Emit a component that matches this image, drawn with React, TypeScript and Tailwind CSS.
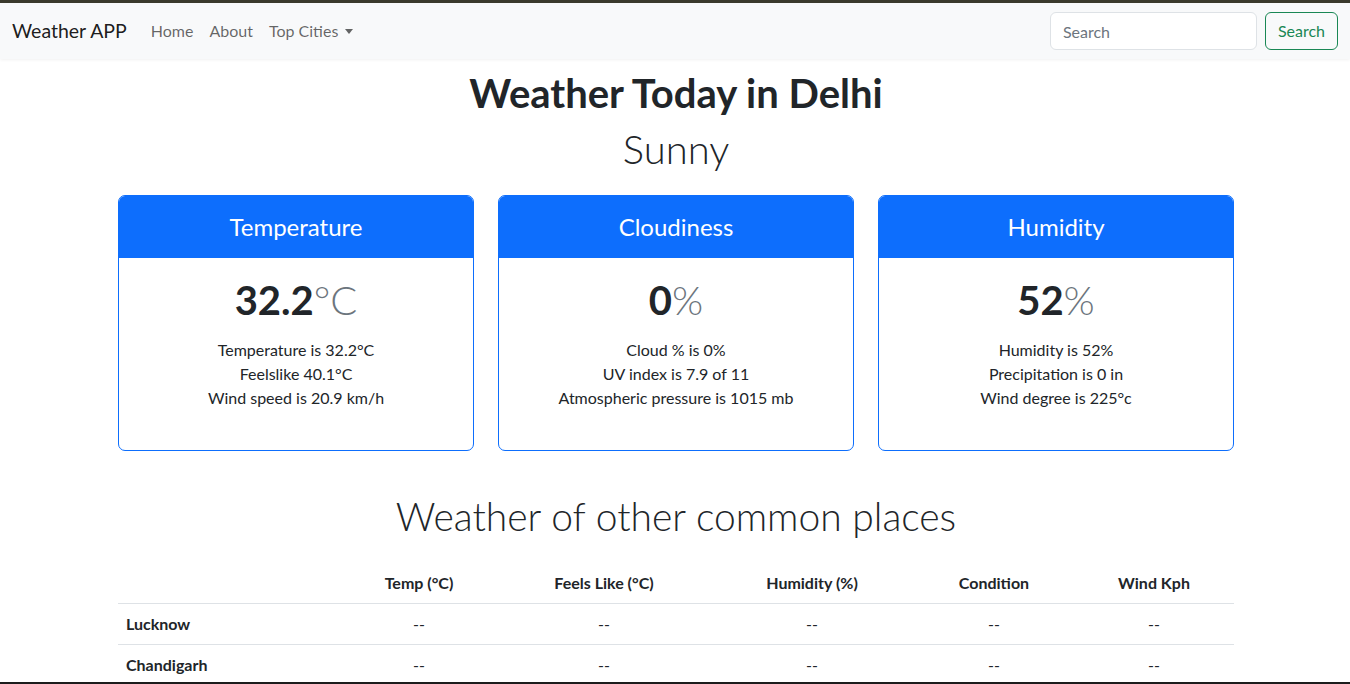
import { useState } from 'react';

const cards = [
  {
    title: 'Temperature',
    value: '32.2',
    unit: '°C',
    lines: ['Temperature is 32.2°C', 'Feelslike 40.1°C', 'Wind speed is 20.9 km/h'],
  },
  {
    title: 'Cloudiness',
    value: '0',
    unit: '%',
    lines: ['Cloud % is 0%', 'UV index is 7.9 of 11', 'Atmospheric pressure is 1015 mb'],
  },
  {
    title: 'Humidity',
    value: '52',
    unit: '%',
    lines: ['Humidity is 52%', 'Precipitation is 0 in', 'Wind degree is 225°c'],
  },
];

const cities = ['Lucknow', 'Chandigarh'];

export default function App() {
  const [query, setQuery] = useState('');

  return (
    <div className="h-screen overflow-hidden border-t-[3px] border-b-2 border-t-[#3a3a2c] border-b-[#1c1c1c] bg-white text-[#212529] font-['Lato','Liberation_Sans',sans-serif]">
      {/* Navbar */}
      <nav className="flex h-[56px] items-center bg-[#f8f9fa] px-3 shadow-[0_1px_3px_rgba(0,0,0,0.06)]">
        <a className="mr-[16px] text-[19.5px] text-black/90">Weather APP</a>
        <ul className="flex items-center text-[16px] text-black/60">
          <li className="px-2">Home</li>
          <li className="px-2">About</li>
          <li className="flex items-center px-2">
            Top Cities
            <span className="ml-[7px] inline-block h-0 w-0 border-x-[4px] border-t-[5px] border-x-transparent border-t-black/60"></span>
          </li>
        </ul>
        <form className="ml-auto flex items-center gap-2" onSubmit={(e) => e.preventDefault()}>
          <input
            value={query}
            onChange={(e) => setQuery(e.target.value)}
            placeholder="Search"
            className="h-[38px] w-[207px] rounded-[6px] border border-[#dee2e6] bg-white px-3 text-[16px] placeholder:text-[#6c757d] outline-none"
          />
          <button className="h-[38px] rounded-[6px] border border-[#198754] px-3 text-[16px] text-[#198754]">
            Search
          </button>
        </form>
      </nav>

      <main className="ml-[118px] w-[1116px]">
        <h1 className="mt-[10px] text-center text-[40px] font-bold leading-[1.2]">Weather Today in Delhi</h1>
        <h2 className="mt-[8px] text-center text-[40px] font-light leading-[1.2]">Sunny</h2>

        {/* Cards */}
        <div className="mt-[22px] grid grid-cols-3 gap-[24px]">
          {cards.map((c) => (
            <div key={c.title} className="h-[256px] overflow-hidden rounded-[7px] border border-[#0d6efd]">
              <div className="flex h-[62px] items-center justify-center bg-[#0d6efd] text-[24px] text-white">
                {c.title}
              </div>
              <div className="pt-[18px] text-center">
                <div className="text-[40px] leading-[1.2]">
                  <span className="font-bold">{c.value}</span>
                  <span className="font-light text-[#6c757d]">{c.unit}</span>
                </div>
                <div className="mt-[14px] text-[16px] leading-[24px]">
                  {c.lines.map((l) => (
                    <div key={l}>{l}</div>
                  ))}
                </div>
              </div>
            </div>
          ))}
        </div>

        <h2 className="mt-[42px] text-center text-[39px] font-light leading-[1.2]">Weather of other common places</h2>

        {/* Table */}
        <table className="mt-[23px] w-full table-fixed border-collapse text-[16px]">
          <colgroup>
            <col className="w-[222px]" />
            <col className="w-[158px]" />
            <col className="w-[212px]" />
            <col className="w-[204px]" />
            <col className="w-[160px]" />
            <col className="w-[160px]" />
          </colgroup>
          <thead>
            <tr className="border-b border-[#dee2e6]">
              <th className="px-2 py-2"></th>
              <th className="px-2 py-2 text-center font-bold">Temp (°C)</th>
              <th className="px-2 py-2 text-center font-bold">Feels Like (°C)</th>
              <th className="px-2 py-2 text-center font-bold">Humidity (%)</th>
              <th className="px-2 py-2 text-center font-bold">Condition</th>
              <th className="px-2 py-2 text-center font-bold">Wind Kph</th>
            </tr>
          </thead>
          <tbody>
            {cities.map((city) => (
              <tr key={city} className="h-[41px] border-b border-[#dee2e6]">
                <th className="px-2 text-left font-bold">{city}</th>
                <td className="px-2 text-center">--</td>
                <td className="px-2 text-center">--</td>
                <td className="px-2 text-center">--</td>
                <td className="px-2 text-center">--</td>
                <td className="px-2 text-center">--</td>
              </tr>
            ))}
          </tbody>
        </table>
      </main>
    </div>
  );
}
